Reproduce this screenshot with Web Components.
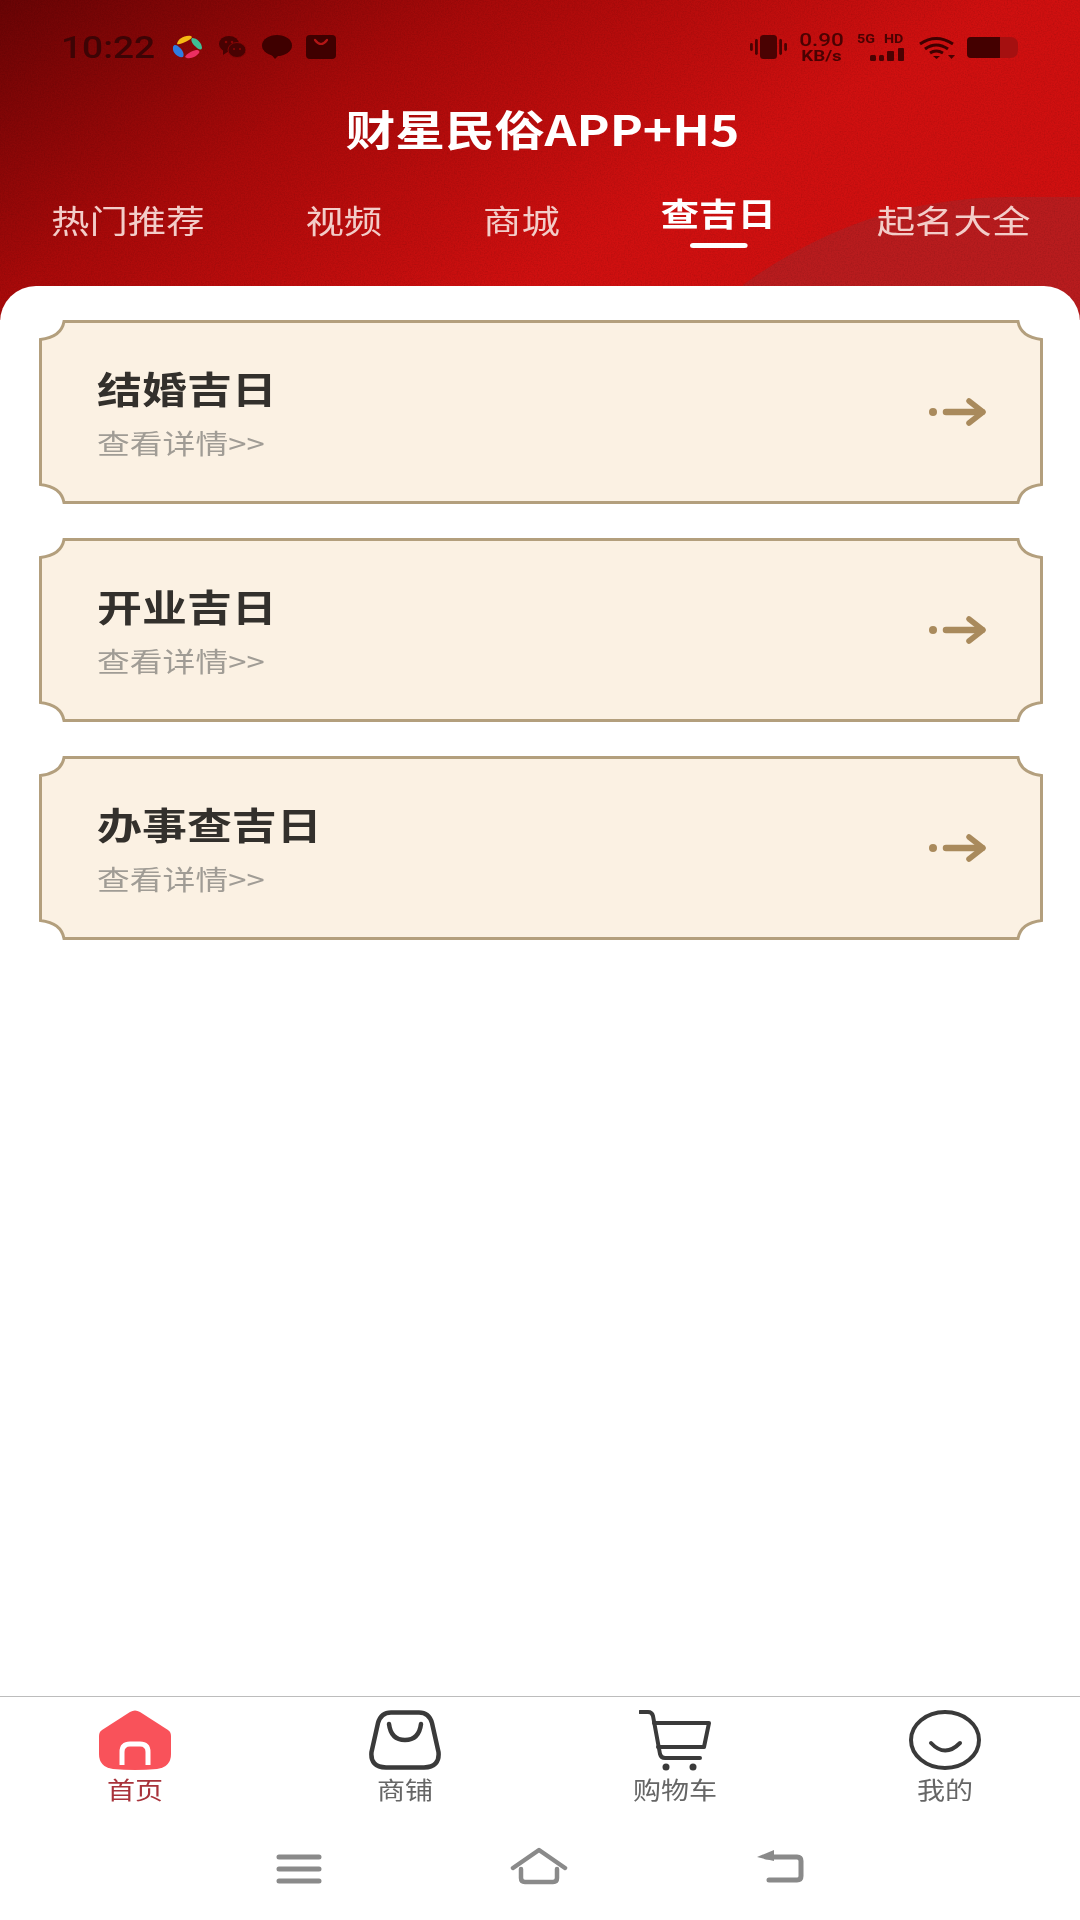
<!DOCTYPE html>
<html lang="zh">
<head>
<meta charset="utf-8">
<title>财星民俗</title>
<style>
  html, body { margin: 0; padding: 0; background: #fff; }
  body { font-family: "Noto Sans CJK SC", "Noto Sans", sans-serif; }
</style>
</head>
<body>
<app-page>
  <app-header slot="header" heading="财星民俗APP+H5">
    <header-tab>热门推荐</header-tab>
    <header-tab>视频</header-tab>
    <header-tab>商城</header-tab>
    <header-tab active>查吉日</header-tab>
    <header-tab>起名大全</header-tab>
  </app-header>
  <date-card heading="结婚吉日"></date-card>
  <date-card heading="开业吉日"></date-card>
  <date-card heading="办事查吉日"></date-card>
  <bottom-nav slot="footer">
    <nav-item label="首页" icon="home" active></nav-item>
    <nav-item label="商铺" icon="bag"></nav-item>
    <nav-item label="购物车" icon="cart"></nav-item>
    <nav-item label="我的" icon="smile"></nav-item>
  </bottom-nav>
  <system-nav slot="footer"></system-nav>
</app-page>

<script>
"use strict";

// the screenshot is stretched sideways, so text gets a scaleX to match it

// || PAGE ||
class appPage extends HTMLElement {
  constructor() {
    super();
    const shadow = this.attachShadow({ mode: "open" });
    shadow.innerHTML = `
    <style>
      :host {
        display: flex;
        flex-direction: column;
        width: 1080px;
        height: 1920px;
        overflow: hidden;
        background: #fff;
      }
      .sheet {
        flex: 1;
        position: relative;
        margin-top: -34px;
        padding: 34px 37px 0 39px;
        display: flex;
        flex-direction: column;
        gap: 34px;
        background: #fff;
        border-radius: 36px 36px 0 0;
      }
    </style>
    <slot name="header"></slot>
    <div class="sheet"><slot></slot></div>
    <slot name="footer"></slot>
    `;
  }
}

// || STATUS BAR ||
class statusBar extends HTMLElement {
  constructor() {
    super();
    const shadow = this.attachShadow({ mode: "open" });
    shadow.innerHTML = `
    <style>
      :host {
        display: flex;
        align-items: center;
        justify-content: space-between;
        height: 94px;
        padding: 0 62px 0 61px;
        color: #4a0202;
        font-family: "Roboto", "Noto Sans", sans-serif;
      }
      .side { display: flex; align-items: center; }
      svg { display: block; }
      .time {
        width: 111px;
        font-size: 32px;
        line-height: 36px;
        font-weight: 500;
        color: #3d0405;
        transform: scaleX(1.16);
        transform-origin: left center;
      }
      .speed {
        width: 47px;
        margin: 0 12px 0 11px;
        text-align: center;
        white-space: nowrap;
      }
      .speed div { transform: scaleX(1.25); }
      .speed .num { font-size: 18px; line-height: 17px; font-weight: 500; }
      .speed .unit { font-size: 15px; line-height: 14px; font-weight: 700; margin-top: 1px; }
      .net { width: 48px; margin-right: 14px; }
      .net span {
        display: block;
        font-size: 13px;
        line-height: 12px;
        font-weight: 700;
        white-space: nowrap;
        word-spacing: 5px;
        transform: scaleX(1.1);
        transform-origin: left center;
      }
    </style>
    <div class="side">
      <span class="time">10:22</span>
      <svg width="30" height="24" viewBox="0 0 30 24">
        <path d="M5 9C6 4 12 0 19 1 21 2 19 4 17 5 13 7 8 10 5 9Z" fill="#f5b914"/>
        <path d="M20 3C25 3 30 8 30 13 29 16 26 14 24 12 21 10 18 5 20 3Z" fill="#3fbf96"/>
        <path d="M1 12C2 9 5 10 7 12 10 14 13 19 11 22 6 23 0 18 1 12Z" fill="#2f7ce0"/>
        <path d="M13 22C14 19 20 16 24 15 27 15 28 16 27 18 24 22 17 25 13 22Z" fill="#ec2f62"/>
      </svg>
      <svg width="27" height="22" viewBox="0 0 27 22" fill="#480202" style="margin-left:17px">
        <ellipse cx="10" cy="8" rx="10" ry="8"/>
        <path d="M4 13 4 19 10 15Z"/>
        <ellipse cx="18" cy="14" rx="9" ry="7.500" stroke="#860606" stroke-width="1"/>
        <circle cx="7" cy="6" r="1.300" fill="#860606"/>
        <circle cx="13" cy="6" r="1.300" fill="#860606"/>
        <circle cx="15" cy="13" r="1.100" fill="#860606"/>
        <circle cx="21" cy="13" r="1.100" fill="#860606"/>
      </svg>
      <svg width="30" height="24" viewBox="0 0 30 24" fill="#3f0000" style="margin-left:16px">
        <ellipse cx="15" cy="10.500" rx="15" ry="10.500"/>
        <path d="M8 18 13 24 18 19Z"/>
      </svg>
      <svg width="30" height="24" viewBox="0 0 30 24" style="margin-left:14px">
        <rect width="30" height="24" rx="4" fill="#3f0000"/>
        <path d="M9 5Q15 13 21 5" fill="none" stroke="#b31515" stroke-width="2.200" stroke-linecap="round"/>
      </svg>
    </div>
    <div class="side">
      <svg width="37" height="24" viewBox="0 0 37 24" fill="#4a0202">
        <rect x="10" y="0" width="17" height="24" rx="3.500"/>
        <rect x="5" y="4" width="2.800" height="16" rx="1.400"/>
        <rect x="0" y="8" width="2.800" height="8" rx="1.400"/>
        <rect x="29.200" y="4" width="2.800" height="16" rx="1.400"/>
        <rect x="34.200" y="8" width="2.800" height="8" rx="1.400"/>
      </svg>
      <div class="speed"><div class="num">0.90</div><div class="unit">KB/s</div></div>
      <div class="net">
        <span>5G HD</span>
        <svg width="48" height="13" viewBox="0 0 48 13" fill="#4a0202" style="margin-top:3px">
          <rect x="13" y="7" width="6" height="6" rx="1.500"/>
          <rect x="22" y="7" width="5" height="6" rx="1.500"/>
          <rect x="30" y="3" width="7" height="10" rx="1"/>
          <rect x="41" y="0" width="6" height="13" rx="1"/>
        </svg>
      </div>
      <svg width="36" height="23" viewBox="0 0 36 23" fill="none" stroke="#3f0000" stroke-width="3">
        <path d="M1 8Q17 -3 34 8"/>
        <path d="M6 13Q17 5 29 13"/>
        <path d="M11 17Q17 13 24 17"/>
        <path d="M14 20 17.500 23 21 20Z" fill="#3f0000" stroke="none"/>
        <path d="M29 19H36L32.500 23Z" fill="#4a0202" stroke="none"/>
      </svg>
      <svg width="51" height="21" viewBox="0 0 51 21" style="margin-left:12px">
        <path d="M4 0H43Q51 0 51 8V13Q51 21 43 21H4Q0 21 0 17V4Q0 0 4 0Z" fill="#a51010"/>
        <path d="M4 0H33V21H4Q0 21 0 17V4Q0 0 4 0Z" fill="#440000"/>
      </svg>
    </div>
    `;
  }
}

// || HEADER ||
class appHeader extends HTMLElement {
  constructor() {
    super();
    const shadow = this.attachShadow({ mode: "open" });
    shadow.innerHTML = `
    <style>
      :host {
        display: block;
        position: relative;
        height: 320px;
        overflow: hidden;
        font-family: "Noto Sans CJK SC", "Noto Sans", sans-serif;
      }
      .bg { position: absolute; left: 0; top: 0; }
      .content { position: relative; }
      h1 {
        margin: -2px 0 0;
        padding-left: 4px;
        height: 72px;
        text-align: center;
        color: #fff;
        font-size: 42px;
        line-height: 72px;
        font-weight: 700;
        transform: scaleX(1.185);
      }
      .tabs {
        display: flex;
        gap: 84px;
        padding-left: 42.500px;
        margin-top: 35px;
        transform: scaleX(1.2);
        transform-origin: left center;
      }
    </style>
    <svg class="bg" width="1080" height="320" viewBox="0 0 1080 320">
      <defs>
        <linearGradient id="red" gradientUnits="userSpaceOnUse" x1="0" y1="0" x2="260" y2="440">
          <stop offset="0" stop-color="#680405"/>
          <stop offset="0.5" stop-color="#a80a0a"/>
          <stop offset="1" stop-color="#cf1010"/>
        </linearGradient>
        <filter id="grain" x="0" y="0" width="100%" height="100%">
          <feTurbulence type="fractalNoise" baseFrequency="0.7" numOctaves="2" seed="4"/>
          <feColorMatrix values="0 0 0 0 0  0 0 0 0 0  0 0 0 0 0  0 0 0 0.9 -0.35"/>
        </filter>
      </defs>
      <rect width="1080" height="320" fill="url(#red)"/>
      <path d="M743 285C790 250 850 222 900 210C940 201 975 197 1010 197H1080V320H743Z" fill="#b81c1e"/>
      <rect width="1080" height="320" filter="url(#grain)" opacity="0.22"/>
    </svg>
    <div class="content">
      <status-bar></status-bar>
      <h1></h1>
      <div class="tabs"><slot></slot></div>
    </div>
    `;
    shadow.querySelector("h1").textContent = this.getAttribute("heading");
  }
}

class headerTab extends HTMLElement {
  constructor() {
    super();
    const shadow = this.attachShadow({ mode: "open" });
    shadow.innerHTML = `
    <style>
      :host {
        display: flex;
        flex-direction: column;
        align-items: center;
        color: #f3cdc9;
        font-size: 32px;
        line-height: 40px;
      }
      :host([active]) {
        color: #fff;
        font-weight: 700;
        margin-top: -7px;
      }
      i { display: none; }
      :host([active]) i {
        display: block;
        width: 48px;
        height: 5px;
        margin-top: 11px;
        background: #fff;
        border-radius: 3px;
      }
    </style>
    <span><slot></slot></span>
    <i></i>
    `;
  }
}

// || CARD ||
class dateCard extends HTMLElement {
  constructor() {
    super();
    const shadow = this.attachShadow({ mode: "open" });
    shadow.innerHTML = `
    <style>
      :host {
        display: flex;
        align-items: center;
        justify-content: space-between;
        position: relative;
        width: 1004px;
        height: 184px;
        box-sizing: border-box;
        padding: 0 57px 0 58px;
        font-family: "Noto Sans CJK SC", "Noto Sans", sans-serif;
      }
      .frame { position: absolute; left: 0; top: 0; }
      .text {
        position: relative;
        margin-top: 2px;
        transform: scaleX(1.215);
        transform-origin: left center;
      }
      .title {
        color: #33302c;
        font-size: 37px;
        line-height: 50px;
        font-weight: 700;
      }
      .more {
        margin-top: 10px;
        color: #a09c95;
        font-size: 27px;
        line-height: 40px;
        white-space: nowrap;
      }
      .arrow { position: relative; display: block; }
    </style>
    <svg class="frame" width="1004" height="184" viewBox="0 0 1004 184">
      <path d="M25 1.500H979C981 13 990 18 1002.500 19.500V164.500C990 166 981 171 979 182.500H25C23 171 14 166 1.500 164.500V19.500C14 18 23 13 25 1.500Z"
        fill="#fbf1e3" stroke="#b39f7d" stroke-width="3"/>
    </svg>
    <div class="text">
      <div class="title"></div>
      <div class="more">查看详情&gt;&gt;</div>
    </div>
    <svg class="arrow" width="57" height="30" viewBox="0 0 57 30" fill="none" stroke="#a98a5c" stroke-linecap="round" stroke-linejoin="round">
      <circle cx="4" cy="15" r="4" fill="#a98a5c" stroke="none"/>
      <path d="M17 15H53" stroke-width="6.500"/>
      <path d="M40 4 54 15 40 26" stroke-width="5.500"/>
    </svg>
    `;
    shadow.querySelector(".title").textContent = this.getAttribute("heading");
  }
}

// || BOTTOM NAV ||
class bottomNav extends HTMLElement {
  constructor() {
    super();
    const shadow = this.attachShadow({ mode: "open" });
    shadow.innerHTML = `
    <style>
      :host {
        display: grid;
        grid-template-columns: repeat(4, 1fr);
        height: 124px;
        box-sizing: border-box;
        border-top: 1px solid #bcbcbc;
        background: #fff;
      }
    </style>
    <slot></slot>
    `;
  }
}

const navIcons = {
  home: `<svg width="72" height="60" viewBox="0 0 72 60">
    <path d="M31 2Q36 -1 41 2L69 20Q72 22 72 26V44Q72 57 58 59Q36 61 14 59Q0 57 0 44V26Q0 22 3 20Z" fill="#f9525a"/>
    <path d="M23 55V42Q23 34 31 34H41Q49 34 49 42V55" fill="none" stroke="#fff" stroke-width="5"/>
  </svg>`,
  bag: `<svg width="72" height="60" viewBox="0 0 72 60" fill="none" stroke="#3a3a3a" stroke-width="4.500" stroke-linecap="round">
    <path d="M22 2.500H50Q60 2.500 63 13L69.500 42Q71 57 55 57.500H17Q1 57 2.500 42L9 13Q12 2.500 22 2.500Z"/>
    <path d="M20 14Q22 30 36 30Q50 30 52 14"/>
  </svg>`,
  cart: `<svg width="72" height="62" viewBox="0 0 72 62" fill="none" stroke="#3a3a3a" stroke-width="4" stroke-linecap="round" stroke-linejoin="round">
    <path d="M1 2H9Q13 2 14 6L21 44Q22 48 26 48H61"/>
    <path d="M15 13H70L65 37H19"/>
    <circle cx="27" cy="57" r="3.500" fill="#3a3a3a" stroke="none"/>
    <circle cx="54" cy="57" r="3.500" fill="#3a3a3a" stroke="none"/>
  </svg>`,
  smile: `<svg width="72" height="60" viewBox="0 0 72 60" fill="none" stroke="#3a3a3a" stroke-width="4" stroke-linecap="round">
    <ellipse cx="36" cy="30" rx="34" ry="28"/>
    <path d="M22 33Q36 48 51 33"/>
  </svg>`,
};

class navItem extends HTMLElement {
  constructor() {
    super();
    const shadow = this.attachShadow({ mode: "open" });
    shadow.innerHTML = `
    <style>
      :host {
        display: flex;
        flex-direction: column;
        align-items: center;
        padding-top: 13px;
        color: #666;
        font-family: "Noto Sans CJK SC", "Noto Sans", sans-serif;
        font-size: 24px;
        line-height: 30px;
      }
      :host([active]) { color: #a8323a; }
      .icon { height: 60px; }
      svg { display: block; }
      .label { margin-top: 4px; transform: scaleX(1.17); }
    </style>
    <div class="icon"></div>
    <div class="label"></div>
    `;
    shadow.querySelector(".icon").innerHTML = navIcons[this.getAttribute("icon")];
    shadow.querySelector(".label").textContent = this.getAttribute("label");
  }
}

// || SYSTEM NAV ||
class systemNav extends HTMLElement {
  constructor() {
    super();
    const shadow = this.attachShadow({ mode: "open" });
    shadow.innerHTML = `
    <style>
      :host {
        display: flex;
        justify-content: center;
        align-items: center;
        gap: 188px;
        height: 100px;
        background: #fff;
      }
      svg { display: block; }
    </style>
    <svg width="46" height="30" viewBox="0 0 46 30" stroke="#8a8a8a" stroke-width="5" stroke-linecap="round" style="margin-bottom:2px">
      <path d="M3 3H43M3 15H43M3 27H43"/>
    </svg>
    <svg width="58" height="38" viewBox="0 0 58 38" fill="none" stroke="#8a8a8a" stroke-width="4.500" stroke-linecap="round" stroke-linejoin="round" style="margin-bottom:8px">
      <path d="M3 21 29 3 55 21"/>
      <path d="M11 22V31Q11 35 15 35H43Q47 35 47 31V22"/>
    </svg>
    <svg width="48" height="34" viewBox="0 0 48 34" fill="none" stroke-linecap="round" stroke-linejoin="round" style="margin-bottom:8px">
      <path d="M13 31H41Q45 31 45 27V12Q45 8 41 8H10" stroke="#8a8a8a" stroke-width="5"/>
      <path d="M1 8 18 1V12Z" fill="#8a8a8a"/>
    </svg>
    `;
  }
}

customElements.define("app-page", appPage);
customElements.define("status-bar", statusBar);
customElements.define("app-header", appHeader);
customElements.define("header-tab", headerTab);
customElements.define("date-card", dateCard);
customElements.define("bottom-nav", bottomNav);
customElements.define("nav-item", navItem);
customElements.define("system-nav", systemNav);
</script>
</body>
</html>
